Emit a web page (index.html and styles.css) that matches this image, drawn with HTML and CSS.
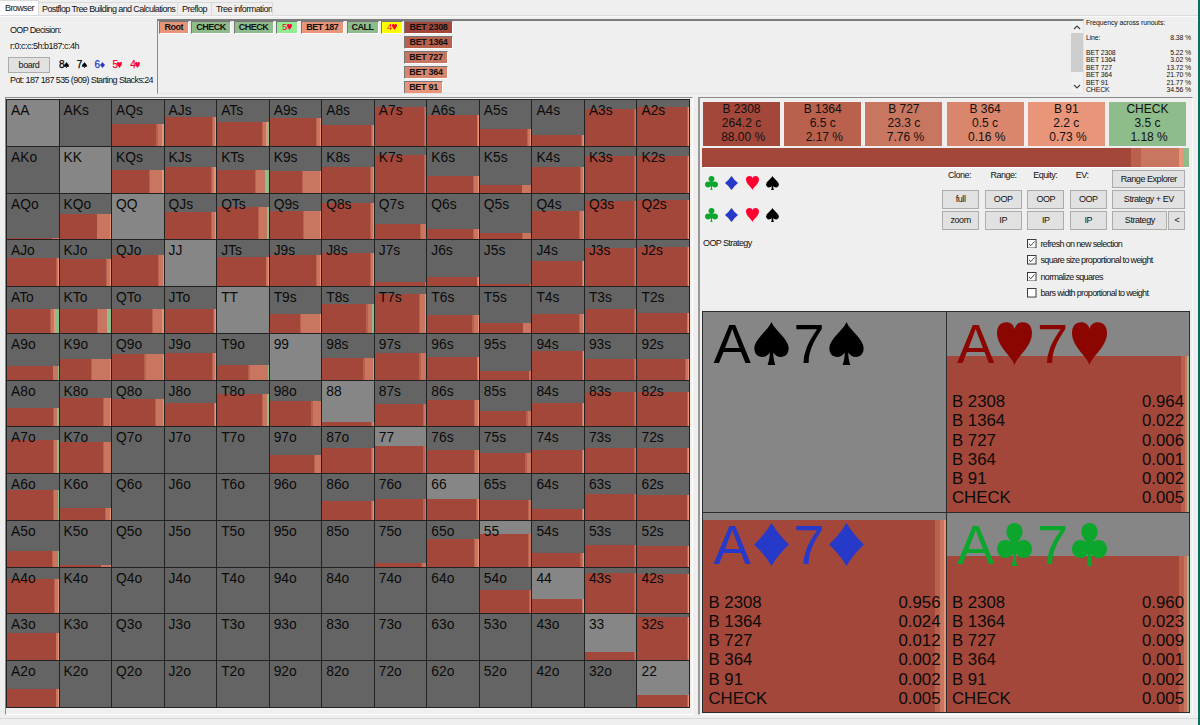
FILE: index.html
```html
<!DOCTYPE html>
<html lang="en">
<head>
<meta charset="utf-8">
<title>Browser</title>
<link rel="stylesheet" href="styles.css">
</head>
<body>
<svg class="defs" aria-hidden="true">
  <symbol id="spade" viewBox="0 0 100 124" preserveAspectRatio="none"><path d="M50 0C59 24 99 49 99 76C99 92 89 101 77 101C67 101 60 96 55 88C55 101 57 113 61 124H39C43 113 45 101 45 88C40 96 33 101 23 101C11 101 1 92 1 76C1 49 41 24 50 0Z"/></symbol>
  <symbol id="heart" viewBox="0 0 100 124" preserveAspectRatio="none"><path d="M50 124C42 98 0 72 0 32C0 12 11 1 26 1C39 1 47 8 50 20C53 8 61 1 74 1C89 1 100 12 100 32C100 72 58 98 50 124Z"/></symbol>
  <symbol id="diamond" viewBox="0 0 100 124" preserveAspectRatio="none"><path d="M50 0Q70 34 100 62Q70 90 50 124Q30 90 0 62Q30 34 50 0Z"/></symbol>
  <symbol id="club" viewBox="0 0 100 124" preserveAspectRatio="none"><path d="M50 0C64 0 73 11 73 25C73 38 65 47 58 56C63 52 69 49 76 49C90 49 100 60 100 75C100 91 89 101 76 101C66 101 59 96 54 88C54 104 55 114 58 124H42C45 114 46 104 46 88C41 96 34 101 24 101C11 101 0 91 0 75C0 60 10 49 24 49C31 49 37 52 42 56C35 47 27 38 27 25C27 11 36 0 50 0Z"/></symbol>
</svg>
<div class="window">
  <nav class="tabs">
    <span class="tab active">Browser</span><span class="tab t2">Postflop Tree Building and Calculations</span><span class="tab t3">Preflop</span><span class="tab t4">Tree information</span>
  </nav>
  <header class="top">
    <section class="info">
      <div class="decision">OOP Decision:</div>
      <div class="line">r:0:c:c:5h:b187:c:4h</div>
      <div class="board"><button class="btn">board</button>
        <span class="card black">8<svg><use href="#spade"/></svg></span>
        <span class="card black">7<svg><use href="#spade"/></svg></span>
        <span class="card blue">6<svg><use href="#diamond"/></svg></span>
        <span class="card red">5<svg><use href="#heart"/></svg></span>
        <span class="card red">4<svg><use href="#heart"/></svg></span>
      </div>
      <div class="pot">Pot: 187 187 535 (909) Starting Stacks:24</div>
    </section>
    <section class="history">
      <div class="path">
        <span class="node w30 c-b91">Root</span><span class="node w40 c-check">CHECK</span><span class="node w40 c-check">CHECK</span><span class="node w22 c-turn red">5<svg><use href="#heart"/></svg></span><span class="node w43 c-b91">BET 187</span><span class="node w32 c-check">CALL</span><span class="node w22 c-river red">4<svg><use href="#heart"/></svg></span>
      </div>
      <div class="options">
        <span class="node w49 c-b2308">BET 2308</span><span class="node w49 c-b1364">BET 1364</span><span class="node w44 c-b727">BET 727</span><span class="node w44 c-b364">BET 364</span><span class="node w39 c-b91">BET 91</span>
      </div>
      <div class="scroll">
        <svg viewBox="0 0 12 12"><path d="M3 8L6 5L9 8"/></svg>
        <div class="thumb"></div>
        <svg viewBox="0 0 12 12"><path d="M3 4L6 7L9 4"/></svg>
      </div>
    </section>
    <section class="freq">
      <div class="title">Frequency across runouts:</div>
      <div class="fr main-line"><span>Line:</span><span>8.38 %</span></div>
      <div class="fr"><span>BET 2308</span><span>5.22 %</span></div>
      <div class="fr"><span>BET 1364</span><span>3.02 %</span></div>
      <div class="fr"><span>BET 727</span><span>13.72 %</span></div>
      <div class="fr"><span>BET 364</span><span>21.70 %</span></div>
      <div class="fr"><span>BET 91</span><span>21.77 %</span></div>
      <div class="fr"><span>CHECK</span><span>34.56 %</span></div>
    </section>
  </header>
  <main class="main">
    <section class="left"><div class="grid" id="grid"></div></section>
    <section class="right">
      <div class="actions">
        <div class="action c-b2308">B 2308<br>264.2 c<br>&nbsp;88.00 %</div>
        <div class="action c-b1364">B 1364<br>6.5 c<br>&nbsp;2.17 %</div>
        <div class="action c-b727">B 727<br>23.3 c<br>&nbsp;7.76 %</div>
        <div class="action c-b364">B 364<br>0.5 c<br>&nbsp;0.16 %</div>
        <div class="action c-b91">B 91<br>2.2 c<br>&nbsp;0.73 %</div>
        <div class="action c-check">CHECK<br>3.5 c<br>&nbsp;1.18 %</div>
      </div>
      <div class="total"><i class="c-b2308" style="width:88.1%"></i><i class="c-b1364" style="width:2.1%"></i><i class="c-b727" style="width:7.8%"></i><i class="c-b91" style="width:0.85%"></i><i class="c-check" style="width:1.15%"></i></div>
      <div class="controls">
        <div class="filters">
          <div class="suits"><svg class="green"><use href="#club"/></svg><svg class="blue"><use href="#diamond"/></svg><svg class="red"><use href="#heart"/></svg><svg class="black"><use href="#spade"/></svg></div>
          <div class="suits"><svg class="green"><use href="#club"/></svg><svg class="blue"><use href="#diamond"/></svg><svg class="red"><use href="#heart"/></svg><svg class="black"><use href="#spade"/></svg></div>
          <div class="mode">OOP Strategy</div>
        </div>
        <div class="tools">
          <div class="buttons">
            <div class="col"><label>Clone:</label><button class="btn">full</button><button class="btn">zoom</button></div>
            <div class="col"><label>Range:</label><button class="btn">OOP</button><button class="btn">IP</button></div>
            <div class="col"><label>Equity:</label><button class="btn">OOP</button><button class="btn">IP</button></div>
            <div class="col"><label>EV:</label><button class="btn">OOP</button><button class="btn">IP</button></div>
            <div class="col wide"><button class="btn">Range Explorer</button><button class="btn">Strategy + EV</button><div class="pair"><button class="btn">Strategy</button><button class="btn">&lt;</button></div></div>
          </div>
          <div class="checks">
            <div class="check"><svg viewBox="0 0 10 10"><rect x=".5" y=".5" width="9" height="9"/><path d="M2 5L4 7L8 2.6"/></svg>refresh on new selection</div>
            <div class="check"><svg viewBox="0 0 10 10"><rect x=".5" y=".5" width="9" height="9"/><path d="M2 5L4 7L8 2.6"/></svg>square size proportional to weight</div>
            <div class="check"><svg viewBox="0 0 10 10"><rect x=".5" y=".5" width="9" height="9"/><path d="M2 5L4 7L8 2.6"/></svg>normalize squares</div>
            <div class="check"><svg viewBox="0 0 10 10"><rect x=".5" y=".5" width="9" height="9"/></svg>bars width proportional to weight</div>
          </div>
        </div>
      </div>
      <div class="combos" id="combos"></div>
    </section>
  </main>
</div>
<script src="app.js"></script>
</body>
</html>
```
FILE: styles.css
```css
* { box-sizing: border-box; }
html, body { margin: 0; height: 100%; }
body { font-family: "Liberation Sans", Arial, sans-serif; font-size: 9px; letter-spacing: -0.6px; color: #111; background: #efefef; overflow: hidden; }
.defs { position: absolute; width: 0; height: 0; }
svg { fill: currentColor; display: block; }
.window { width: 1200px; height: 725px; border-right: 2px solid #08705c; display: flex; flex-direction: column; }

.c-b2308 { background: #a3473a; }
.c-b1364 { background: #b9614d; }
.c-b727 { background: #c97660; }
.c-b364 { background: #da866d; }
.c-b91 { background: #e9957a; }
.c-check { background: #8fbc8b; }
.c-turn { background: #90ee90; }
.c-river { background: #ffff00; }
.black { color: #000; }
.blue { color: #2739c8; }
.red { color: #ff0030; }
.green { color: #0ca62c; }

.tabs { height: 16px; display: flex; align-items: flex-end; border-bottom: 1px solid #dcdcdc; box-shadow: 0 1px #fafafa; }
.tab { height: 13px; line-height: 13px; border: 1px solid #dadada; border-bottom: 0; border-left: 0; padding-left: 3px; white-space: nowrap; overflow: hidden; }
.tab.active { height: 15px; width: 39px; background: #fff; padding-left: 5px; line-height: 14px; }
.t2 { width: 139px; }
.t3 { width: 34px; padding-left: 4px; letter-spacing: -0.5px; }
.t4 { width: 61px; padding-left: 4px; letter-spacing: -0.55px; }

.top { height: 81px; display: flex; }
.info { width: 157px; padding: 8px 0 0 10px; white-space: nowrap; line-height: 12px; }
.decision { letter-spacing: -0.65px; }
.line { margin-top: 4px; letter-spacing: -0.5px; }
.board { display: flex; align-items: center; margin: 5px 0 1px -2px; height: 16px; }
.btn { font: inherit; letter-spacing: -0.45px; color: #111; background: #e1e1e1; border: 1px solid #acacac; padding: 0; margin: 0; height: 19px; text-align: center; }
.board .btn { width: 42px; height: 16px; margin-right: 9px; }
.card { display: flex; align-items: center; width: 17.8px; font-size: 10px; -webkit-text-stroke: 0.25px currentColor; }
.card svg { width: 5px; height: 6px; }
.history { width: 927px; height: 75px; margin-top: 3px; border: 1px solid #e4e4e4; border-top: 2px solid #7c7c7c; border-left: 1px solid #8a8a8a; display: flex; position: relative; }
.path { display: flex; gap: 2.5px; padding-left: 1px; width: 246px; flex: none; }
.options { display: flex; flex-direction: column; gap: 2px; align-items: flex-start; overflow: hidden; }
.node { flex: none; height: 13px; border: 1px solid #777; border-color: #777 #fff #fff #777; font-weight: bold; font-size: 9px; line-height: 10px; padding-bottom: 1px; letter-spacing: -0.5px; display: flex; align-items: center; justify-content: center; white-space: nowrap; }
.node svg { width: 5px; height: 6px; }
.node.red { font-weight: normal; font-size: 9.5px; }
.w30 { width: 29.5px; } .w40 { width: 40px; } .w22 { width: 22px; } .w43 { width: 43.5px; } .w32 { width: 32px; }
.w49 { width: 49px; } .w44 { width: 44px; } .w39 { width: 39px; }
.options .node { letter-spacing: -0.3px; }
.scroll { margin-left: auto; width: 12px; display: flex; flex-direction: column; background: #f1f1f1; }
.scroll svg { width: 12px; height: 12px; fill: none; stroke: #444; stroke-width: 1.2; }
.thumb { height: 39px; background: #cdcdcd; margin-bottom: 9px; }
.freq { width: 107px; padding: 3px 0 0 2px; font-size: 6.9px; letter-spacing: -0.1px; line-height: 7.5px; white-space: nowrap; }
.freq .title { line-height: 8px; }
.fr { display: flex; justify-content: space-between; letter-spacing: -0.12px; }
.main-line { margin: 7px 0; }

.main { height: 622px; display: flex; padding-left: 5px; border-bottom: 1px solid #d8d8d8; }
.left { width: 688px; height: 618px; padding: 1px 0 0 0; border-left: 1px solid #888; border-top: 1px solid #888; border-right: 1px solid #fff; border-bottom: 1px solid #fff; }
.grid { width: 684px; height: 609px; padding: 1px; background: #222; display: grid; grid-template-columns: repeat(13, 1fr); grid-template-rows: repeat(13, 1fr); gap: 1px; }
.cell { position: relative; background: #646464; display: flex; align-items: flex-end; overflow: hidden; }
.cell.pair-hand { background: #868686; }
.cell .name { position: absolute; left: 4px; top: 3px; font-size: 13.8px; line-height: 15px; letter-spacing: 0; color: #0b0b0b; }
.bar { width: 100%; display: flex; }
.bar i { height: 100%; flex: none; }
.bar i:first-child { flex: 1; }

.right { margin-left: 5px; width: 495px; height: 618px; border-left: 2px solid #999; border-top: 1px solid #888; border-right: 1px solid #fafafa; border-bottom: 1px solid #fff; padding: 4px 0 0 2px; display: flex; flex-direction: column; }
.actions { display: flex; gap: 4.2px; padding-left: 1px; height: 44px; flex: none; }
.action { width: 77px; text-align: center; font-size: 12px; line-height: 14px; letter-spacing: 0; flex: none; white-space: nowrap; }
.total { width: 487px; height: 20px; margin-top: 2px; display: flex; border-bottom: 1px solid #fff; flex: none; }
.total i { height: 100%; }
.controls { height: 143px; display: flex; flex: none; }
.filters { width: 240px; padding-top: 8px; }
.suits { display: flex; gap: 7px; padding-left: 3px; height: 14px; margin-bottom: 18px; }
.suits svg { width: 13px; height: 14px; margin-right: 0.3px; }
.mode { margin: -3px 0 0 1px; line-height: 12px; }
.tools { padding-top: 2px; }
.buttons { display: flex; gap: 5.4px; }
.col { width: 37.2px; display: flex; flex-direction: column; gap: 2px; }
.col label { height: 18px; line-height: 10px; padding-left: 6px; letter-spacing: -0.5px; }
.wide { width: 73px; }
.wide > .btn:first-child { height: 18px; }
.col > .btn:nth-child(2) { height: 18.5px; }
.pair { display: flex; gap: 1px; }
.pair .btn:first-child { width: 55px; }
.pair .btn:last-child { width: 17px; }
.checks { padding: 9px 0 0 85px; }
.check { display: flex; align-items: center; gap: 4px; height: 10px; margin-bottom: 6.5px; letter-spacing: -0.66px; white-space: nowrap; }
.check svg { width: 9.5px; height: 9.5px; fill: #fff; stroke: #333; stroke-width: 1; }
.check path { fill: none; }

.combos { width: 488px; height: 402px; padding: 1px; background: #2c2c2c; display: grid; grid-template-columns: 1fr 1fr; grid-template-rows: 1fr 1fr; gap: 1px; flex: none; }
.combo { position: relative; background: #868686; display: flex; align-items: flex-end; overflow: hidden; }
.combo .content { position: absolute; inset: 0; display: flex; flex-direction: column; justify-content: space-between; padding: 4px 5px 4px 5.5px; }
.hand { display: flex; font-size: 56px; line-height: 56px; letter-spacing: 0; padding-left: 5px; }
.hand span { width: 40px; }
.hand span + svg + span { width: 35px; }
.hand svg { width: 35px; height: 43px; margin: 6px 5px 0 0; flex: none; }
.hand svg:last-child { margin-right: 0; }
.row { display: flex; justify-content: space-between; font-size: 16.8px; line-height: 19.2px; letter-spacing: 0; color: #0b0b0b; }
.darkred { color: #8b0600; }
```
FILE: app.js
```js
const RANKS = "AKQJT98765432";
const ACTIONS = ["c-b2308", "c-b1364", "c-b727", "c-b91", "c-check"];

// One entry per hand: bar height, then the widths of the smaller actions, in thirds of a pixel.
const HANDS = [
  "0 0 67:4,14,4 88:3,5,3 74:4,10,3,4 84:3,11,3 65:3,4,2 117:3,2,2 93:2,3,2 52:3,7,2,1 35:2,4,2 111:2,2,2 119:1,2,2",
  "0 0 71:3,35,5 78:3,7,2,3 70:4,25,4,8 67:3,52,3 78:3,4,1,2 115:3,2,2 52:3,12,2 26:2,25,1,1 78:3,7,2 113:2,3,2 113:1,2,2",
  "4:0,18,2 77:2,38,3 0 82:3,8,3 97:3,25,1,3 86:4,48,3 108:3,5,2 47:3,14,2 32:3,14,2 19:3,23,2 84:3,8,3 116:2,3,2 119:1,2,2",
  "86:2,5,1 83:4,9,2 94:4,12,2 0 88:2,5,2 94:4,9,1,2 101:3,5,2 14:0,2,2 29:1,4,2 8:1,3,1 75:2,3,2 116:2,3,2 118:1,2,2",
  "74:4,9,3,10 74:3,25,3,10 74:4,28,2,2 72:2,5,1,1 0 57:3,57,2,1 88:4,12,2,4 117:4,14,1,4 54:4,13,2,1 30:1,23,1 58:3,7,1,3 73:1,3,2 62:1,3,2",
  "44:2,13,1,2 64:5,54,2 80:5,52,2 83:4,7,1,2 47:4,55,1,1 0 68:6,22,1,2 82:4,15,2 70:1,4,2 28:1,4,2 88:3,2,2 63:3,2,2 63:4,6,2",
  "55:4,8,1,4 85:4,19,2 82:3,21,1 69:2,3,2 97:5,12,1,3 75:4,24,2 14:3,5,1 66:3,5,2 79:3,9,2 47:5,9,1 71:2,3,2 102:2,3,2 102:2,2,2",
  "101:3,8,1,4 94:4,19,1 0 0 0 55:4,17,2 75:3,4,2 82:4,3,2 71:3,9,2 61:4,12,2 69:2,3,2 75:2,3,2 75:1,3,2",
  "91:3,10,1,2 37:4,12,2 0 0 0 0 57:3,4,2 65:4,3,2 63:3,4,2 60:3,5,2 35:2,3,2 78:2,3,2 76:1,3,2",
  "50:4,14,1,2 6:0,28,2 0 0 0 0 0 12:4,9,2 84:3,9,2 99:3,4,2 43:4,5,2 66:3,2,2 63:2,2,2",
  "103:3,11,1 0 0 0 0 0 0 0 0 71:3,3,2 43:2,3,2 122:3,2,2 119:2,2,2",
  "81:2,5,2 0 0 0 0 0 0 0 0 0 0 24:3,2,2 130:2,2,2",
  "54:2,5,2 0 0 0 0 0 0 0 0 0 0 0 37:2,2,2"
];

function bar(height, widths) {
  const parts = widths.map((w, i) => `<i class="${ACTIONS[i + 1]}" style="width:${w}px"></i>`);
  return `<div class="bar" style="height:${height}px"><i class="c-b2308"></i>${parts.join("")}</div>`;
}

function handName(r, c) {
  if (r === c) return RANKS[r] + RANKS[r];
  return c > r ? RANKS[r] + RANKS[c] + "s" : RANKS[c] + RANKS[r] + "o";
}

document.getElementById("grid").innerHTML = HANDS.map((line, r) =>
  line.split(" ").map((entry, c) => {
    const [h, w] = entry.split(":");
    const fill = w ? bar(Math.max(1, Math.round((h - 1) / 3)), w.split(",").map(v => +(v / 3).toFixed(2))) : "";
    return `<div class="cell${r === c ? " pair-hand" : ""}">${fill}<span class="name">${handName(r, c)}</span></div>`;
  }).join("")
).join("");

const LABELS = ["B 2308", "B 1364", "B 727", "B 364", "B 91", "CHECK"];
const COMBOS = [
  { suit: "spade", color: "black" },
  { suit: "heart", color: "darkred", height: 156, widths: [4, 2.5, 1, 1], values: ["0.964", "0.022", "0.006", "0.001", "0.002", "0.005"] },
  { suit: "diamond", color: "blue", height: 192, widths: [5.3, 3.3, 1, 1], values: ["0.956", "0.024", "0.012", "0.002", "0.002", "0.005"] },
  { suit: "club", color: "green", height: 156, widths: [5.5, 3, 1, 1], values: ["0.960", "0.023", "0.009", "0.001", "0.002", "0.005"] }
];

document.getElementById("combos").innerHTML = COMBOS.map(k => {
  const icon = `<svg><use href="#${k.suit}"/></svg>`;
  const rows = (k.values || []).map((v, i) => `<div class="row"><span>${LABELS[i]}</span><span>${v}</span></div>`).join("");
  return `<div class="combo">${k.height ? bar(k.height, k.widths) : ""}<div class="content"><div class="hand ${k.color}"><span>A</span>${icon}<span>7</span>${icon}</div><div>${rows}</div></div></div>`;
}).join("");
```
